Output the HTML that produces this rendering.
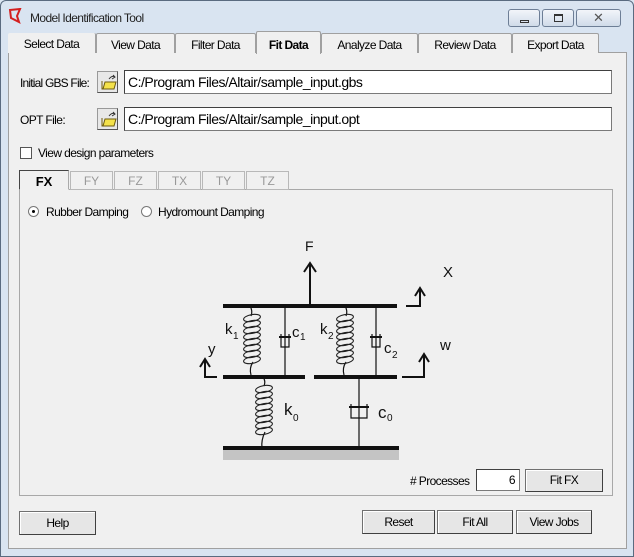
<!DOCTYPE html>
<html><head><style>
*{box-sizing:border-box;margin:0;padding:0}
body{width:634px;height:557px;background:#dbe6f2;font-family:"Liberation Sans",sans-serif;font-size:12px;color:#000;position:relative;overflow:hidden}
.a{position:absolute}
.frame{left:0;top:0;width:634px;height:557px;border:1px solid #5a6b80;border-radius:6px 6px 0 0;background:#d9e4f1}
.tab{position:absolute;top:33px;height:20px;background:#f0f0f0;border:1px solid #a0a0a0;border-bottom:none;border-radius:2px 2px 0 0;text-align:center;line-height:22px;font-size:12px;letter-spacing:-0.6px}
.btn{position:absolute;background:#e6e6e6;border:1px solid #707070;border-right-color:#404040;border-bottom-color:#404040;box-shadow:inset 1px 1px 0 #fff;text-align:center;font-size:12px;letter-spacing:-0.6px}
.inp{position:absolute;background:#fff;border:1px solid #7a7a7a;border-top-color:#404040;border-left-color:#404040;font-size:14px;padding-left:3px;letter-spacing:-0.5px}
.st{position:absolute;top:171px;height:19px;border:1px solid #b8b8b8;color:#999;text-align:center;font-size:12px;line-height:18px;background:#f0f0f0}
.fold{position:absolute;width:21px;height:22px;background:#e8e8e8;border:1px solid #999;border-right-color:#555;border-bottom-color:#555}
.l{letter-spacing:-0.6px}
</style></head><body>
<div class="a frame"></div>
<svg class="a" style="left:8px;top:8px" width="14" height="16"><path d="M2 2 L12 1 L9 8 L11 14 L3 10 Z" fill="none" stroke="#d42020" stroke-width="2"/></svg>
<div class="a l" style="left:30px;top:11px;font-size:12px;color:#222">Model Identification Tool</div>
<div class="a" style="left:508px;top:9px;width:32px;height:18px;border:1px solid #6d7e96;border-radius:3px;background:linear-gradient(#f2f5fa,#d0dbe9)"><div class="a" style="left:11px;top:10px;width:9px;height:3px;border:1px solid #333"></div></div>
<div class="a" style="left:542px;top:9px;width:32px;height:18px;border:1px solid #6d7e96;border-radius:3px;background:linear-gradient(#f2f5fa,#d0dbe9)"><div class="a" style="left:11px;top:4px;width:9px;height:8px;border:1px solid #333;border-top-width:2px"></div></div>
<div class="a" style="left:576px;top:9px;width:45px;height:18px;border:1px solid #6d7e96;border-radius:3px;background:linear-gradient(#f2f5fa,#d0dbe9);text-align:center;line-height:16px;font-size:13px;color:#555">✕</div>
<div class="a" style="left:8px;top:52px;width:619px;height:497px;background:#f0f0f0;border:1px solid #a0a0a0"></div>
<div class="tab" style="left:8px;width:88px;border-left:none;border-top:none">Select Data</div>
<div class="tab" style="left:96px;width:79px">View Data</div>
<div class="tab" style="left:175px;width:81px">Filter Data</div>
<div class="tab" style="left:256px;width:65px;top:31px;height:23px;font-weight:bold;line-height:26px;font-size:12px">Fit Data</div>
<div class="tab" style="left:321px;width:97px">Analyze Data</div>
<div class="tab" style="left:418px;width:94px">Review Data</div>
<div class="tab" style="left:512px;width:87px">Export Data</div>

<div class="a l" style="left:20px;top:76px;letter-spacing:-0.8px">Initial GBS File:</div>
<div class="fold" style="left:97px;top:71px"></div>
<svg class="a" style="left:99px;top:73px" width="18" height="18"><path d="M3 8 L3 16 L15 16 L17 9 L6 9 L4 16" fill="#f4e24a" stroke="#6b5a10"/><path d="M10 6 Q13 2 16 4 M14 2 L16 4 L13 6" fill="none" stroke="#333"/></svg>
<div class="inp" style="left:124px;top:70px;width:488px;height:24px;line-height:22px">C:/Program Files/Altair/sample_input.gbs</div>
<div class="a l" style="left:20px;top:113px">OPT File:</div>
<div class="fold" style="left:97px;top:108px"></div>
<svg class="a" style="left:99px;top:110px" width="18" height="18"><path d="M3 8 L3 16 L15 16 L17 9 L6 9 L4 16" fill="#f4e24a" stroke="#6b5a10"/><path d="M10 6 Q13 2 16 4 M14 2 L16 4 L13 6" fill="none" stroke="#333"/></svg>
<div class="inp" style="left:124px;top:107px;width:488px;height:24px;line-height:22px">C:/Program Files/Altair/sample_input.opt</div>
<div class="a" style="left:20px;top:147px;width:12px;height:12px;border:1px solid #555;background:#fff"></div>
<div class="a l" style="left:38px;top:146px">View design parameters</div>

<div class="a" style="left:19px;top:189px;width:594px;height:307px;border:1px solid #a8a8a8"></div>
<div class="st" style="left:19px;width:50px;top:170px;height:20px;border-color:#444 #aaa #f0f0f0 #444;color:#000;font-weight:bold;font-size:13px;line-height:22px">FX</div>
<div class="st" style="left:70px;width:43px">FY</div>
<div class="st" style="left:114px;width:43px">FZ</div>
<div class="st" style="left:158px;width:43px">TX</div>
<div class="st" style="left:202px;width:43px">TY</div>
<div class="st" style="left:246px;width:43px">TZ</div>

<div class="a" style="left:28px;top:206px;width:11px;height:11px;border:1px solid #777;border-radius:50%;background:#fff"><div class="a" style="left:3px;top:3px;width:3px;height:3px;background:#000;border-radius:50%"></div></div>
<div class="a l" style="left:46px;top:205px">Rubber Damping</div>
<div class="a" style="left:141px;top:206px;width:11px;height:11px;border:1px solid #777;border-radius:50%;background:#fff"></div>
<div class="a l" style="left:158px;top:205px">Hydromount Damping</div>

<svg class="a" style="left:0;top:0" width="634" height="557" font-family="Liberation Sans, sans-serif">
<defs>
<g id="coil" fill="none" stroke="#222" stroke-width="1.1">
<ellipse cx="0" cy="0" rx="8.5" ry="3.4" transform="rotate(-10)"/>
<ellipse cx="0" cy="6" rx="8.5" ry="3.4" transform="rotate(-10 0 6)"/>
<ellipse cx="0" cy="12" rx="8.5" ry="3.4" transform="rotate(-10 0 12)"/>
<ellipse cx="0" cy="18" rx="8.5" ry="3.4" transform="rotate(-10 0 18)"/>
<ellipse cx="0" cy="24" rx="8.5" ry="3.4" transform="rotate(-10 0 24)"/>
<ellipse cx="0" cy="30" rx="8.5" ry="3.4" transform="rotate(-10 0 30)"/>
<ellipse cx="0" cy="36" rx="8.5" ry="3.4" transform="rotate(-10 0 36)"/>
<ellipse cx="0" cy="42" rx="8.5" ry="3.4" transform="rotate(-10 0 42)"/>
</g>
</defs>
<g stroke="#111" fill="none" stroke-width="1.2">
<line x1="223" y1="306" x2="397" y2="306" stroke-width="4"/>
<line x1="223" y1="377" x2="305" y2="377" stroke-width="4"/>
<line x1="314" y1="377" x2="397" y2="377" stroke-width="4"/>
<line x1="223" y1="448" x2="399" y2="448" stroke-width="4"/>
<rect x="223" y="450" width="176" height="10" fill="#c4c4c4" stroke="none"/>
<line x1="310" y1="306" x2="310" y2="264" stroke-width="2"/>
<path d="M304 272 L310 263 L316 272" stroke-width="2"/>
<path d="M406 306 L420 306 L420 290" stroke-width="2"/><path d="M415 296 L420 288 L425 296" stroke-width="2"/>
<path d="M402 377 L424 377 L424 354" stroke-width="2"/><path d="M419 362 L424 354 L429 362" stroke-width="2"/>
<path d="M217 377 L205 377 L205 360" stroke-width="2"/><path d="M200 367 L205 359 L210 367" stroke-width="2"/>
<line x1="285" y1="306" x2="285" y2="377"/><path d="M281 334 L281 347 L289 347 L289 334"/><line x1="279" y1="337" x2="291" y2="337" stroke-width="2"/>
<line x1="376" y1="306" x2="376" y2="377"/><path d="M372 334 L372 347 L380 347 L380 334"/><line x1="370" y1="337" x2="382" y2="337" stroke-width="2"/>
<line x1="359" y1="377" x2="359" y2="448"/><path d="M351 404 L351 418 L367 418 L367 404"/><line x1="349" y1="407" x2="369" y2="407" stroke-width="2"/>
<path d="M250 306 q3 5 1 10"/><path d="M253 362 q-4 6 -2 13"/>
<path d="M345 306 q3 5 1 10"/><path d="M346 362 q-4 6 -2 13"/>
<path d="M263 377 q3 4 1 9"/><path d="M265 432 q-4 8 -3 16"/>
</g>
<use href="#coil" x="252" y="318"/>
<use href="#coil" x="345" y="318"/>
<use href="#coil" x="264" y="389"/>
<g fill="#111" font-size="14">
<text x="305" y="251">F</text>
<text x="443" y="277" font-size="15">X</text>
<text x="440" y="350" font-size="15">w</text>
<text x="208" y="354" font-size="15">y</text>
<text x="225" y="334" font-size="15">k</text><text x="233" y="339" font-size="10">1</text>
<text x="292" y="337" font-size="15">c</text><text x="300" y="340" font-size="10">1</text>
<text x="320" y="334" font-size="15">k</text><text x="328" y="339" font-size="10">2</text>
<text x="384" y="353" font-size="15">c</text><text x="392" y="358" font-size="10">2</text>
<text x="284" y="415" font-size="17">k</text><text x="293" y="421" font-size="10">0</text>
<text x="378" y="418" font-size="17">c</text><text x="387" y="421" font-size="10">0</text>
</g>
</svg>

<div class="a l" style="left:410px;top:474px"># Processes</div>
<div class="inp" style="left:476px;top:469px;width:44px;height:22px;font-size:12px;text-align:right;padding-right:4px;line-height:20px">6</div>
<div class="btn" style="left:525px;top:469px;width:78px;height:23px;line-height:21px">Fit FX</div>

<div class="btn" style="left:19px;top:511px;width:77px;height:24px;line-height:22px">Help</div>
<div class="btn" style="left:362px;top:510px;width:73px;height:24px;line-height:22px">Reset</div>
<div class="btn" style="left:437px;top:510px;width:76px;height:24px;line-height:22px">Fit All</div>
<div class="btn" style="left:516px;top:510px;width:76px;height:24px;line-height:22px">View Jobs</div>
</body></html>
